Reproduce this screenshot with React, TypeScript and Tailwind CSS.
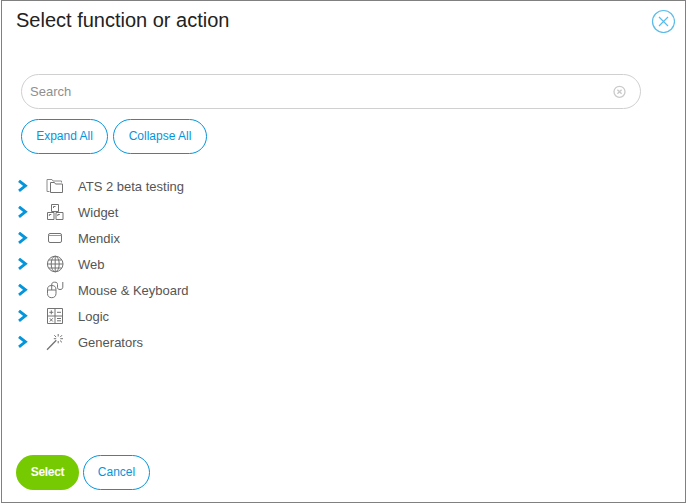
import React from "react";

const Svg = ({ children }: { children: React.ReactNode }) => (
  <svg className="block h-[18px] w-[18px]" viewBox="0 0 18 18" fill="none" stroke="#737373" strokeWidth="1">
    {children}
  </svg>
);

const FolderIcon = () => (
  <Svg>
    <path d="M3.5 14.5h-2.5V2.5h5l1 1.5h8.5v1.5" stroke="#8c8c8c" />
    <path d="M4.5 15.5V5.5h4l1 1.5h7v8.5z" />
  </Svg>
);

const WidgetIcon = () => (
  <Svg>
    <path d="M5.5 1.5h7v7h-7zM1.5 9.5h6.5v7h-6.5zM10 9.5h7v7h-7z" />
    <path d="M7.5 5V3.5h2M3.3 13v-1.5h2M11.8 13v-1.5h2" />
  </Svg>
);

const WindowIcon = () => (
  <Svg>
    <rect x="2.5" y="4.5" width="13" height="9" rx="1.5" />
    <path d="M2.5 6.5h13" stroke="#999" />
  </Svg>
);

const GlobeIcon = () => (
  <Svg>
    <circle cx="9.2" cy="9" r="7.8" />
    <ellipse cx="9.2" cy="9" rx="4" ry="7.8" />
    <path d="M9.2 1.2v15.6M1.4 9h15.6M2.8 5h12.8M2.8 13h12.8" />
  </Svg>
);

const MouseIcon = () => (
  <Svg>
    <path d="M1.5 8.5c0-2.8 1.5-4 4.2-4s4.3 1.2 4.3 4v4c0 2.6-1.6 4.2-4.3 4.2s-4.2-1.6-4.2-4.2zM1.5 9h8.5M5.7 9V4C5.7 2 6.6 1.2 8.3 1.2h.7c1.8 0 2.5.8 2.5 2.3v2.8c0 1.5.8 2.2 2.5 2.2s2.8-.8 2.8-2.3V1" />
  </Svg>
);

const LogicIcon = () => (
  <Svg>
    <path d="M1.5 1.5h15v15h-15zM9 1.5v15M1.5 9h15" />
    <path d="M3.3 5.3h4M5.3 3.3v4M11 5.3h4M3.8 11.3l3 3.2M6.8 11.3l-3 3.2M11 11.5h4M11 13.8h4" />
  </Svg>
);

const WandIcon = () => (
  <Svg>
    <path d="M1 16.7L10.3 7.2" strokeWidth="1.3" />
    <path d="M12.2 1v2.5M8.3 2.2l1.8 1.9M16 2.2l-1.8 1.9M7.8 5.7h2.4M14.3 5.7H17M14 7.5l2 1.9M12.2 8v2.3" />
  </Svg>
);

const items = [
  { label: "ATS 2 beta testing", Icon: FolderIcon },
  { label: "Widget", Icon: WidgetIcon },
  { label: "Mendix", Icon: WindowIcon },
  { label: "Web", Icon: GlobeIcon },
  { label: "Mouse & Keyboard", Icon: MouseIcon },
  { label: "Logic", Icon: LogicIcon },
  { label: "Generators", Icon: WandIcon },
];

const outline =
  "flex h-[35px] items-center justify-center rounded-full border border-[#0595db] pb-px text-[12px] text-[#0595db]";

export default function App() {
  return (
    <div className="h-[503px] w-[686px] bg-white pl-px font-['Liberation_Sans',Arial,sans-serif]">
      <main className="flex h-full flex-col border border-[#808080]">
        <header className="flex h-[73px] items-start justify-between pl-[14px] pr-[10px]">
          <h1 className="mt-[6px] text-[20px] leading-[26px] text-[#222]">Select function or action</h1>
          <button aria-label="Close" className="mt-[8px]">
            <svg className="block h-6 w-6" viewBox="0 0 24 24" fill="none" stroke="#5bbce9" strokeWidth="1.2">
              <circle cx="12.5" cy="12.5" r="11" />
              <path d="M8 8l9 9M17 8l-9 9" />
            </svg>
          </button>
        </header>
        <div className="ml-[19px] flex h-[35px] w-[620px] shrink-0 items-center justify-between rounded-full border border-[#d0d0d0] pl-2 pr-[14px]">
          <span className="text-[13px] text-[#8f8f8f]">Search</span>
          <svg className="h-[14px] w-[14px]" viewBox="0 0 14 14" fill="none" stroke="#cacaca">
            <circle cx="7.5" cy="6.8" r="5.5" strokeWidth="1.3" />
            <path d="M5.4 4.8l4.2 4M9.6 4.8l-4.2 4" strokeWidth="1.4" />
          </svg>
        </div>
        <div className="ml-[19px] mt-[10px] flex gap-[5px]">
          <button className={`${outline} w-[87px]`}>Expand All</button>
          <button className={`${outline} w-[94px]`}>Collapse All</button>
        </div>
        <ul className="mt-[19px] pl-[15px]">
          {items.map(({ label, Icon }) => (
            <li key={label} className="flex h-[26px] items-center">
              <svg className="mr-[17px] h-3 w-3" viewBox="0 0 12 12" fill="none" stroke="#0595db" strokeWidth="2.9">
                <path d="M2 .8l6.4 5L2 10.8" />
              </svg>
              <Icon />
              <span className="ml-[14px] pt-[2px] text-[13px] text-[#555]">{label}</span>
            </li>
          ))}
        </ul>
        <footer className="mb-[12px] ml-[14px] mt-auto flex gap-1">
          <button className="flex h-[35px] w-[63px] items-center justify-center rounded-full bg-[#76ca02] pb-px text-[12px] font-bold tracking-[-0.3px] text-white">Select</button>
          <button className={`${outline} w-[67px]`}>Cancel</button>
        </footer>
      </main>
    </div>
  );
}
